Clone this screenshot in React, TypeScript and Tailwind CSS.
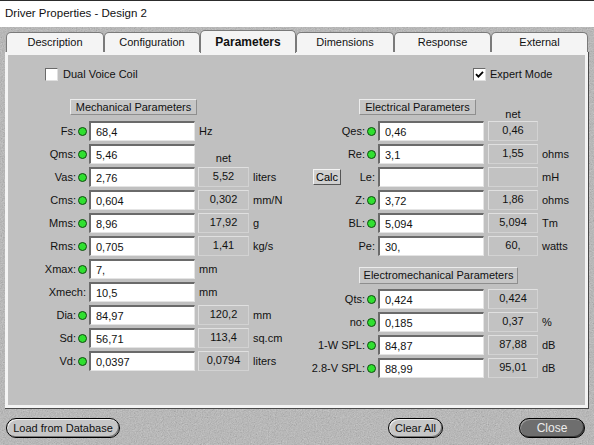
import React from "react";

type Field = {
  label: string;
  value: string;
  net?: string;
  unit?: string;
  dot?: boolean;
  calc?: boolean;
  netLabel?: boolean;
};

const mechanical: Field[] = [
  { label: "Fs:", value: "68,4", unit: "Hz" },
  { label: "Qms:", value: "5,46", netLabel: true },
  { label: "Vas:", value: "2,76", net: "5,52", unit: "liters" },
  { label: "Cms:", value: "0,604", net: "0,302", unit: "mm/N" },
  { label: "Mms:", value: "8,96", net: "17,92", unit: "g" },
  { label: "Rms:", value: "0,705", net: "1,41", unit: "kg/s" },
  { label: "Xmax:", value: "7,", unit: "mm" },
  { label: "Xmech:", value: "10,5", unit: "mm", dot: false },
  { label: "Dia:", value: "84,97", net: "120,2", unit: "mm" },
  { label: "Sd:", value: "56,71", net: "113,4", unit: "sq.cm" },
  { label: "Vd:", value: "0,0397", net: "0,0794", unit: "liters" },
];

const electrical: Field[] = [
  { label: "Qes:", value: "0,46", net: "0,46" },
  { label: "Re:", value: "3,1", net: "1,55", unit: "ohms" },
  { label: "Le:", value: "", net: "", unit: "mH", dot: false, calc: true },
  { label: "Z:", value: "3,72", net: "1,86", unit: "ohms" },
  { label: "BL:", value: "5,094", net: "5,094", unit: "Tm" },
  { label: "Pe:", value: "30,", net: "60,", unit: "watts", dot: false },
];

const electromech: Field[] = [
  { label: "Qts:", value: "0,424", net: "0,424" },
  { label: "no:", value: "0,185", net: "0,37", unit: "%" },
  { label: "1-W SPL:", value: "84,87", net: "87,88", unit: "dB" },
  { label: "2.8-V SPL:", value: "88,99", net: "95,01", unit: "dB" },
];

const tabs = ["Description", "Configuration", "Parameters", "Dimensions", "Response", "External"];
const tabWidths = ["w-[98px]", "w-[96px]", "w-[96px]", "w-[98px]", "w-[97px]", "w-[97px]"];

function Grain() {
  return (
    <svg className="absolute inset-0 h-full w-full" aria-hidden>
      <filter id="grain">
        <feTurbulence type="fractalNoise" baseFrequency="0.85" numOctaves="3" stitchTiles="stitch" />
        <feColorMatrix type="matrix" values="0.33 0.33 0.33 0 0  0.33 0.33 0.33 0 0  0.33 0.33 0.33 0 0  0 0 0 0 1" />
      </filter>
      <rect width="100%" height="100%" fill="#b6b6b6" />
      <rect width="100%" height="100%" filter="url(#grain)" opacity="0.45" />
    </svg>
  );
}

function Dot() {
  return <span className="ml-[2px] h-[9px] w-[9px] shrink-0 rounded-full border border-[#104a10] bg-[#30e030]" />;
}

function Row({ f, labelW, netW, netGap }: { f: Field; labelW: string; netW: string; netGap: string }) {
  const dot = f.dot !== false;
  return (
    <div className="flex h-[20px] items-center">
      <div className={`${labelW} flex shrink-0 items-center justify-end`}>
        {f.calc && (
          <button className="mr-auto ml-[13px] h-[16px] w-[28px] border border-[#f4f4f4] border-r-[#555] border-b-[#555] bg-[#d0d0d0] text-[11px] leading-[13px]">
            Calc
          </button>
        )}
        <span className="whitespace-nowrap text-[#111]">{f.label}</span>
        {dot ? <Dot /> : <span className="w-[1px]" />}
      </div>
      <input
        readOnly
        defaultValue={f.value}
        className="ml-[2px] h-[20px] w-[106px] border-t-2 border-l-2 border-r border-b border-t-[#6a6a6a] border-l-[#6a6a6a] border-r-[#e4e4e4] border-b-[#e4e4e4] bg-white pl-[5px] text-[11px] text-[#111] outline-none"
      />
      {f.net !== undefined ? (
        <>
          <div className={`${netGap} ${netW} flex h-[20px] items-center justify-center border border-[#e0e0e0] border-r-[#d2d2d2] border-b-[#d2d2d2] bg-[#c2c2c2] pb-[2px] text-[#111]`}>
            {f.net}
          </div>
          {f.unit && <span className="ml-[4px] text-[#111]">{f.unit}</span>}
        </>
      ) : f.netLabel ? (
        <span className={`${netGap} ${netW} mt-[9px] text-center text-[#111]`}>net</span>
      ) : (
        f.unit && <span className="ml-[4px] text-[#111]">{f.unit}</span>
      )}
    </div>
  );
}

function GroupBox({ title, className }: { title: string; className: string }) {
  return (
    <div className={`${className} flex items-center justify-center border border-[#ececec] border-r-[#8e8e8e] border-b-[#8e8e8e] bg-[#c6c6c6] text-[#111]`}>
      {title}
    </div>
  );
}

function Check({ checked }: { checked?: boolean }) {
  return (
    <span className="flex h-[13px] w-[13px] items-center justify-center border-t border-l border-[#6a6a6a] border-r-[#e0e0e0] border-b-[#e0e0e0] border-r border-b bg-white">
      {checked && (
        <svg width="9" height="9" viewBox="0 0 9 9">
          <path d="M1 4.2 L3.4 6.6 L8 1.8" fill="none" stroke="#000" strokeWidth="1.8" />
        </svg>
      )}
    </span>
  );
}

export default function App() {
  return (
    <div className="flex h-[445px] w-[594px] flex-col overflow-hidden font-['Liberation_Sans',Arial,sans-serif] text-[11px] text-black">
      <div className="flex h-[27px] shrink-0 items-center border-t border-[#2c2c2c] bg-white pl-[5px] text-[11.5px] text-[#111]">
        Driver Properties - Design 2
      </div>
      <div className="relative flex-1">
        <Grain />
        <div className="relative flex flex-col pl-[5px]">
          {/* tab strip */}
          <div className="flex h-[25px] items-end pl-[1px]">
            {tabs.map((t, i) => {
              const active = t === "Parameters";
              return (
                <div
                  key={t}
                  className={`${tabWidths[i]} flex items-center justify-center rounded-t-[5px] border border-b-0 border-[#7a7a7a] bg-[#f4f4f4] text-[#111] ${
                    active ? "relative z-10 -mb-[1px] h-[23px] text-[12px] font-bold" : "h-[20px] text-[11px]"
                  }`}
                >
                  {t}
                </div>
              );
            })}
          </div>

          {/* parameters page */}
          <div className="h-[357px] w-[584px] border-r border-b border-[#4a4a4a] bg-[#f4f4f4] p-[3px]">
            <div className="flex h-full flex-col bg-[#c0c0c0] pt-[13px]">
              <div className="flex h-[13px] items-center">
                <label className="ml-[37px] flex w-[428px] items-center gap-[5px] text-[#111]">
                  <Check /> Dual Voice Coil
                </label>
                <label className="flex items-center gap-[4px] text-[#111]">
                  <Check checked /> Expert Mode
                </label>
              </div>

              <div className="mt-[18px] flex">
                <div className="flex w-[292px] flex-col">
                  <GroupBox title="Mechanical Parameters" className="ml-[62px] h-[16px] w-[127px]" />
                  <div className="mt-[6px] flex flex-col gap-[3px]">
                    {mechanical.map((f) => (
                      <Row key={f.label} f={f} labelW="w-[79px]" netW="w-[51px]" netGap="ml-[3px]" />
                    ))}
                  </div>
                </div>

                <div className="flex flex-col">
                  <div className="flex h-[16px] items-start">
                    <GroupBox title="Electrical Parameters" className="ml-[59px] h-[16px] w-[117px]" />
                    <span className="mt-[7px] ml-[12px] w-[50px] text-center text-[#111]">net</span>
                  </div>
                  <div className="mt-[6px] flex flex-col gap-[3px]">
                    {electrical.map((f) => (
                      <Row key={f.label} f={f} labelW="w-[76px]" netW="w-[50px]" netGap="ml-[4px]" />
                    ))}
                  </div>
                  <GroupBox title="Electromechanical Parameters" className="mt-[11px] ml-[59px] h-[17px] w-[159px]" />
                  <div className="mt-[5px] flex flex-col gap-[3px]">
                    {electromech.map((f) => (
                      <Row key={f.label} f={f} labelW="w-[76px]" netW="w-[50px]" netGap="ml-[4px]" />
                    ))}
                  </div>
                </div>
              </div>
            </div>
          </div>

          {/* dialog buttons */}
          <div className="mt-[9px] flex h-[20px] items-center text-[11px]">
            <button className="ml-[1px] h-[20px] w-[114px] rounded-full border-[1.5px] border-black bg-[#c6c6c6] text-[#111] shadow-[inset_1px_1px_0_#eeeeee,inset_-1px_-1px_0_#777777]">
              Load from Database
            </button>
            <button className="ml-[268px] h-[20px] w-[55px] rounded-full border-[1.5px] border-black bg-[#c6c6c6] text-[#111] shadow-[inset_1px_1px_0_#eeeeee,inset_-1px_-1px_0_#777777]">
              Clear All
            </button>
            <button className="ml-[76px] h-[20px] w-[66px] rounded-full border-[1.5px] border-black bg-[#6e6e6e] text-[12px] text-[#ececec] shadow-[inset_1px_1px_0_#9a9a9a,inset_-1px_-1px_0_#3a3a3a]">
              Close
            </button>
          </div>
        </div>
      </div>
    </div>
  );
}
